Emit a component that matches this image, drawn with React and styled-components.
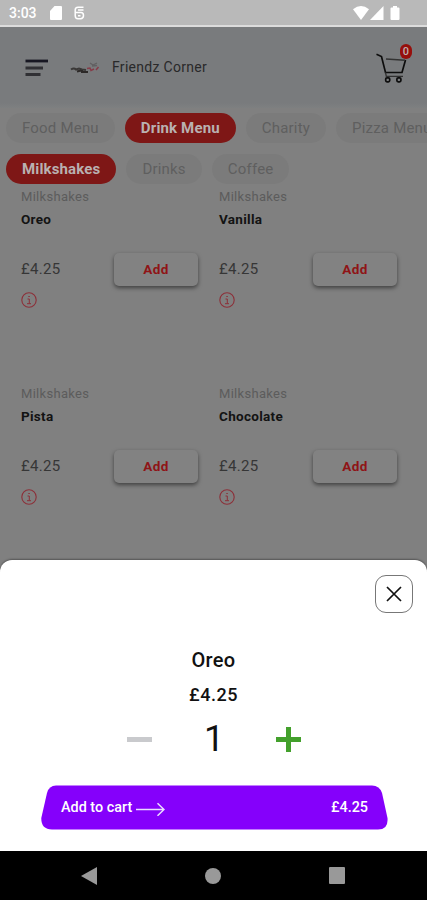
import React from "react"
import styled, { createGlobalStyle } from 'styled-components'

const GlobalStyle = createGlobalStyle`
  body {
    margin: 0;
    overflow: hidden;
    font-family: Roboto, "Liberation Sans", sans-serif;
  }
  * {
    box-sizing: border-box;
  }
`;

const Screen = styled.div`
  display: flex;
  flex-direction: column;
  width: 427px;
  height: 900px;
  overflow: hidden;
  background: #808080;
`;

const StatusBar = styled.div`
  display: flex;
  align-items: center;
  flex: none;
  height: 27px;
  padding: 0 27px 0 9px;
  background: #b9b9b9;
  border-bottom: 2px solid #dcdcdc;
  color: #fff;
`;

const Clock = styled.span`
  width: 41px;
  font-size: 14px;
  font-weight: 500;
`;

const Spacer = styled.div`
  flex: 1;
`;

const Header = styled.header`
  display: flex;
  align-items: center;
  flex: none;
  height: 81px;
  padding: 0 13px 0 25px;
  background: linear-gradient(#797b7d 0, #797b7d 76px, #7e8081 81px);
`;

const Brand = styled.div`
  display: flex;
  align-items: center;
  gap: 12px;
  margin: 0 0 1px 21px;
  color: #29292a;
  font-size: 14px;
  letter-spacing: 0.3px;
`;

const CartButton = styled.div`
  position: relative;
  width: 40px;
  height: 40px;
  margin-left: auto;
  padding: 4px 0 0 2px;
`;

const Badge = styled.span`
  position: absolute;
  top: -4px;
  right: 2px;
  width: 12px;
  height: 15px;
  border-radius: 6px;
  background: #960f0c;
  color: #bdb0b0;
  font-size: 11px;
  font-weight: 500;
  line-height: 15px;
  text-align: center;
`;

const ChipRow = styled.div`
  display: flex;
  flex: none;
  gap: 10px;
  height: 30px;
  margin-top: ${props => props.$top}px;
  padding-left: 6px;
  overflow: hidden;
`;

const Chip = styled.div`
  flex: none;
  height: 30px;
  padding: 0 16px;
  border-radius: 15px;
  background: ${props => props.$active ? '#7e1716' : '#7b7b7b'};
  color: ${props => props.$active ? '#b9b1b1' : '#5f5f5f'};
  font-size: 15px;
  font-weight: ${props => props.$active ? 700 : 400};
  letter-spacing: ${props => props.$active ? 0.15 : 0.2}px;
  line-height: 30px;
  white-space: nowrap;
`;

const Grid = styled.div`
  display: grid;
  flex: 1;
  grid-template-columns: 177px 178px;
  grid-auto-rows: 197px;
  column-gap: 21px;
  min-height: 0;
  padding: 5px 0 0 21px;
`;

const Category = styled.div`
  color: #5c5c5c;
  font-size: 13px;
  letter-spacing: 0.3px;
  line-height: 16px;
`;

const ItemName = styled.div`
  margin-top: 6px;
  color: #131313;
  font-size: 13.500px;
  font-weight: 700;
  letter-spacing: 0.3px;
  line-height: 16px;
`;

const PriceRow = styled.div`
  display: flex;
  align-items: center;
  justify-content: space-between;
  height: 34px;
  margin: 25px 0 6px;
`;

const Price = styled.span`
  color: #363636;
  font-size: 15px;
  letter-spacing: 0.3px;
`;

const AddButton = styled.div`
  width: 84px;
  height: 33px;
  border-radius: 5px;
  background: #828282;
  box-shadow: 0 2px 4px rgba(0, 0, 0, 0.5);
  color: #8f1416;
  font-size: 13.500px;
  font-weight: 700;
  letter-spacing: 0.4px;
  line-height: 32px;
  text-align: center;
`;

const Sheet = styled.section`
  display: flex;
  flex: none;
  flex-direction: column;
  align-items: center;
  height: 291px;
  margin-top: -12px;
  padding-top: 15px;
  border-radius: 12px 12px 0 0;
  background: #fff;
  box-shadow: 0 -1px 2px rgba(0, 0, 0, 0.35);
`;

const CloseButton = styled.div`
  display: flex;
  align-items: center;
  justify-content: center;
  align-self: flex-end;
  width: 38px;
  height: 38px;
  margin-right: 14px;
  border: 1px solid #777;
  border-radius: 11px;
`;

const SheetTitle = styled.div`
  margin-top: 35px;
  color: #111;
  font-size: 20px;
  font-weight: 500;
  letter-spacing: 0.3px;
  line-height: 24px;
`;

const SheetPrice = styled.div`
  margin-top: 11px;
  color: #111;
  font-size: 18px;
  font-weight: 500;
  letter-spacing: 0.5px;
  line-height: 24px;
`;

const Stepper = styled.div`
  display: flex;
  align-items: center;
  justify-content: space-between;
  width: 175px;
  height: 43px;
  margin: 11px 0 24px 1px;
`;

const Count = styled.span`
  color: #111;
  font-size: 36px;
  line-height: 43px;
`;

const CartBar = styled.div`
  position: relative;
  display: flex;
  align-items: center;
  width: 347px;
  height: 45px;
  margin-left: 2px;
  padding: 0 20px 1px;
  color: #fff;
  font-size: 14.400px;
  font-weight: 500;
`;

const CartShape = styled.svg`
  position: absolute;
  inset: 0;
`;

const CartLabel = styled.span`
  position: relative;
  display: flex;
  align-items: center;
  flex: 1;
  gap: 4px;
`;

const Arrow = styled.svg`
  margin-top: 4px;
`;

const CartTotal = styled.span`
  position: relative;
`;

const NavBar = styled.nav`
  display: flex;
  align-items: center;
  justify-content: space-between;
  flex: none;
  height: 49px;
  padding: 0 82px 0 81px;
  background: #000;
`;

const items = ['Oreo', 'Vanilla', 'Pista', 'Chocolate'];

const SdCard = () => (
  <svg width="12" height="14" viewBox="0 0 12 14">
    <path d="M4.500 0H11a1 1 0 0 1 1 1v12a1 1 0 0 1-1 1H1a1 1 0 0 1-1-1V5z" fill="#fff" />
  </svg>
);

const SyncIcon = styled.svg`
  margin-left: 12px;
`;

const SyncMark = () => (
  <SyncIcon width="11" height="14" viewBox="0 0 11 14" fill="none" stroke="#fff" strokeWidth="1.500">
    <path d="M9.500 1.200H4Q1.200 1.200 1.200 4V6.500H7Q9.500 6.500 9.500 9.500T6.500 12.800H4Q1.200 12.800 1.200 9.500V6M4 4H9.500M4 9.700H6.500" />
  </SyncIcon>
);

const Signals = () => (
  <svg width="47" height="14" viewBox="0 0 47 14" fill="#fff">
    <path d="M0 3.200Q8 -3 16 3.200L8 14z" />
    <path d="M30.500 0V14H17z" />
    <path d="M40 0h4v1.500h1.500q1 0 1 1V13q0 1-1 1h-7q-1 0-1-1V2.500q0-1 1-1H40z" />
  </svg>
);

const MenuIcon = () => (
  <svg width="24" height="18" viewBox="0 0 24 18">
    <path d="M.5 2H23" stroke="#171722" strokeWidth="2.800" />
    <path d="M.5 9H18M.5 15.500H15.500" stroke="#303034" strokeWidth="2.800" />
  </svg>
);

// the cup and saucer mark next to the shop name
const Logo = () => (
  <svg width="30" height="16" viewBox="0 0 30 16" fill="none">
    <path d="M1 10.500q3-2 5 0l3-1 3 1 4 .5" stroke="#3a3837" strokeWidth="2" />
    <path d="M7 12.500l4-1M11 13h7M12 11v2" stroke="#2c2928" strokeWidth="1.900" />
    <path d="M17 9.500l3-.5 1 2.500 3-1.500M26 11l2.500-3" stroke="#863c49" strokeWidth="1.500" />
    <path d="M20 4l3 2 4-2M22 7l5-.5" stroke="#626062" strokeWidth="1.300" />
  </svg>
);

const CartIcon = () => (
  <svg width="32" height="32" viewBox="0 0 32 32" fill="none" stroke="#0d0d0d" strokeWidth="1.700">
    <path d="M.5 2.300L5.500 4.500 9.500 20.500H26L29.500 8" />
    <path d="M10 7l19 1.200" stroke="#333" strokeWidth="1.500" />
    <path d="M9.500 20.500l.8 3.800H27" stroke="#303030" strokeWidth="1.300" />
    <rect x="9.700" y="25.800" width="4" height="4" rx="1.300" />
    <rect x="20.900" y="25.800" width="4" height="4" rx="1.300" />
  </svg>
);

const InfoSvg = styled.svg`
  display: block;
`;

const InfoIcon = () => (
  <InfoSvg width="16" height="16" viewBox="0 0 16 16" fill="none" stroke="#8c2f38">
    <circle cx="8" cy="8" r="7.200" strokeWidth="1.100" />
    <path d="M6.500 7h1.800v4.500M6 11.700h4M7.300 4.500h1.500" />
  </InfoSvg>
);

const MenuItem = ({ name }) => (
  <div>
    <Category>Milkshakes</Category>
    <ItemName>{name}</ItemName>
    <PriceRow>
      <Price>£4.25</Price>
      <AddButton>Add</AddButton>
    </PriceRow>
    <InfoIcon />
  </div>
);

export default class App extends React.Component {
  render() {
    return (
      <Screen>
        <GlobalStyle />
        <StatusBar>
          <Clock>3:03</Clock>
          <SdCard />
          <SyncMark />
          <Spacer />
          <Signals />
        </StatusBar>
        <Header>
          <MenuIcon />
          <Brand>
            <Logo />
            <span>Friendz Corner</span>
          </Brand>
          <CartButton>
            <CartIcon />
            <Badge>0</Badge>
          </CartButton>
        </Header>
        <ChipRow $top={5}>
          <Chip>Food Menu</Chip>
          <Chip $active>Drink Menu</Chip>
          <Chip>Charity</Chip>
          <Chip>Pizza Menu</Chip>
        </ChipRow>
        <ChipRow $top={11}>
          <Chip $active>Milkshakes</Chip>
          <Chip>Drinks</Chip>
          <Chip>Coffee</Chip>
        </ChipRow>
        <Grid>
          {items.map(name => <MenuItem key={name} name={name} />)}
        </Grid>
        <Sheet>
          <CloseButton>
            <svg width="16" height="16" viewBox="0 0 16 16" stroke="#111" strokeWidth="1.700">
              <path d="M1 1l14 14M15 1L1 15" />
            </svg>
          </CloseButton>
          <SheetTitle>Oreo</SheetTitle>
          <SheetPrice>£4.25</SheetPrice>
          <Stepper>
            <svg width="25" height="25" viewBox="0 0 25 25">
              <path d="M0 12.500h25" stroke="#c9cacd" strokeWidth="5" />
            </svg>
            <Count>1</Count>
            <svg width="25" height="25" viewBox="0 0 25 25">
              <path d="M0 12.500h25M12.500 0v25" stroke="#43a02c" strokeWidth="5" />
            </svg>
          </Stepper>
          <CartBar>
            <CartShape width="347" height="45" viewBox="0 0 347 45">
              <path d="M15 .5H331Q338.500 .5 341 8L346.500 33Q347.500 44.500 337 44.500H11Q0 44.500 .3 33L6 8Q8 .5 15 .5z" fill="#8500fb" />
            </CartShape>
            <CartLabel>
              Add to cart
              <Arrow width="29" height="14" viewBox="0 0 29 14" fill="none" stroke="#eadcff" strokeWidth="1.500">
                <path d="M0 7.500h28M21.500 1.200l6.500 6.300-6.500 6.300" />
              </Arrow>
            </CartLabel>
            <CartTotal>£4.25</CartTotal>
          </CartBar>
        </Sheet>
        <NavBar>
          <svg width="16" height="18" viewBox="0 0 16 18"><path d="M16 0v18L0 9z" fill="#999" /></svg>
          <svg width="16" height="16" viewBox="0 0 16 16"><circle cx="8" cy="8" r="8" fill="#999" /></svg>
          <svg width="16" height="17" viewBox="0 0 16 17"><rect width="16" height="17" rx="1" fill="#999" /></svg>
        </NavBar>
      </Screen>
    )
  }
}
